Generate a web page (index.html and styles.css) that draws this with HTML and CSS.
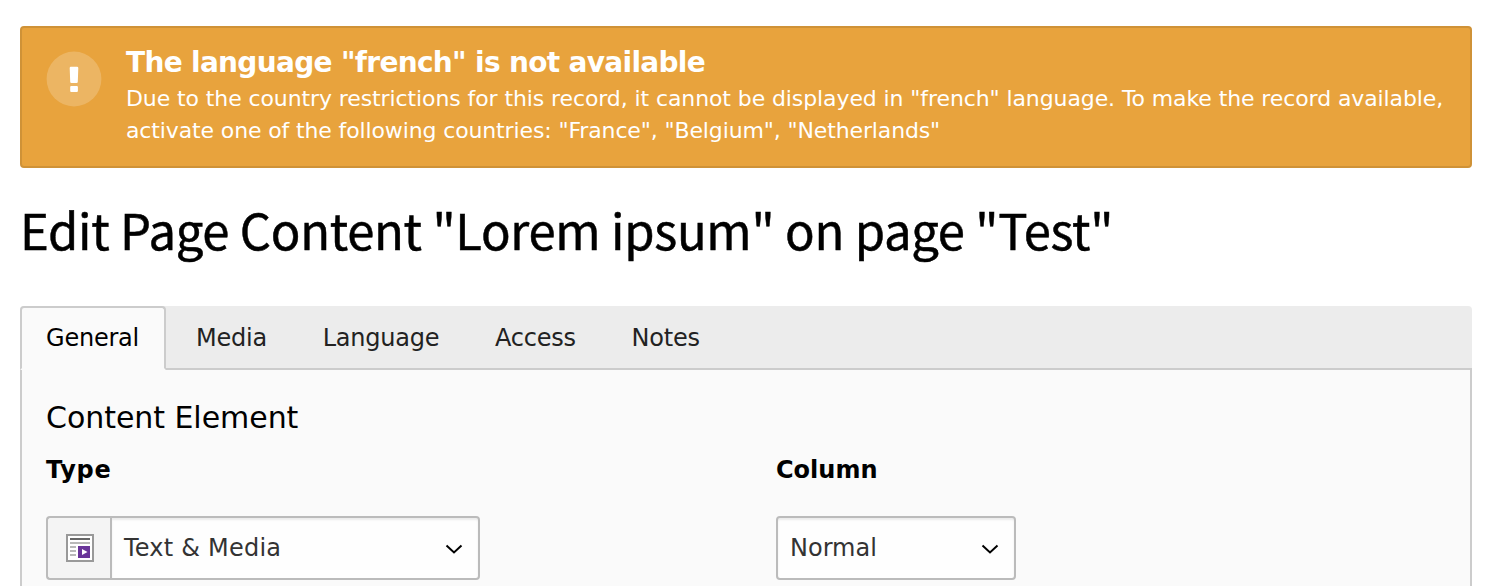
FILE: index.html
```html
<!DOCTYPE html>
<html lang="en">
<head>
<meta charset="utf-8">
<title>Edit Page Content</title>
<link rel="stylesheet" href="styles.css">
</head>
<body>
<main class="module">
  <section class="callout">
    <span class="callout-icon">
      <svg width="56" height="56" viewBox="0 0 56 56"><circle cx="28" cy="28" r="27.4" fill="#fff" fill-opacity=".2"/><path d="M23.700 17q0-1.200 1.200-1.200h6.200q1.200 0 1.200 1.200l-.5 13.800q0 1.200-1.200 1.200h-5.200q-1.200 0-1.200-1.200z" fill="#fff"/><rect x="24.200" y="35" width="7.700" height="6" rx="1" fill="#fff"/></svg>
    </span>
    <div class="callout-content">
      <div class="callout-title">The language "french" is not available</div>
      <div class="callout-body">Due to the country restrictions for this record, it cannot be displayed in "french" language. To make the record available,<br><span class="callout-countries">activate one of the following countries: "France", "Belgium", "Netherlands"</span></div>
    </div>
  </section>
  <h1 class="page-title">Edit Page Content "Lorem ipsum" on page "Test"</h1>
  <nav class="tabs">
    <a class="tab tab-active">General</a>
    <a class="tab">Media</a>
    <a class="tab">Language</a>
    <a class="tab">Access</a>
    <a class="tab">Notes</a>
  </nav>
  <section class="panel">
    <h2 class="panel-title">Content Element</h2>
    <div class="fields">
      <div class="field">
        <div class="field-label label-type">Type</div>
        <div class="select-group">
          <span class="select-addon">
            <svg width="28" height="28" viewBox="0 0 28 28"><rect x="1" y="1" width="26" height="26" fill="#fff" stroke="#999" stroke-width="2"/><path d="M4 4h20v2H4z" fill="#666"/><path d="M4 8h20v2H4zM4 12h6v2H4zM4 16h6v2H4zM4 20h6v2H4z" fill="#b9b9b9"/><path d="M12 12h12v12H12z" fill="#693599"/><path d="M16 15l5.500 3-5.500 3z" fill="#fff"/></svg>
          </span>
          <div class="select select-type">Text &amp; Media<svg class="chevron" width="18" height="12" viewBox="0 0 18 12"><path d="M1.500 2.500L9 9.500l7.500-7" fill="none" stroke="#000" stroke-width="2"/></svg></div>
        </div>
      </div>
      <div class="field">
        <div class="field-label">Column</div>
        <div class="select select-column">Normal<svg class="chevron" width="18" height="12" viewBox="0 0 18 12"><path d="M1.500 2.500L9 9.500l7.500-7" fill="none" stroke="#000" stroke-width="2"/></svg></div>
      </div>
    </div>
  </section>
</main>
</body>
</html>
```

FILE: styles.css
```css
* { box-sizing: border-box; }
body {
  margin: 0;
  background: #fff;
  color: #000;
  font-family: "DejaVu Sans", sans-serif;
  font-size: 24px;
}
.module { padding: 26px 24px 0 20px; }
.callout {
  display: flex;
  gap: 24px;
  height: 142px;
  padding: 18px 24px;
  border: 2px solid #cf9237;
  border-radius: 4px;
  background: #e8a33d;
  color: #fff;
}
.callout-icon { flex: none; width: 56px; height: 56px; margin-top: 5px; }
.callout-icon svg { display: block; }
.callout-content { white-space: nowrap; }
.callout-title {
  font-size: 28px;
  line-height: 34px;
  font-weight: 700;
  letter-spacing: -.69px;
}
.callout-body {
  margin-top: 3px;
  font-size: 22px;
  line-height: 32px;
  letter-spacing: -.1px;
}
.callout-countries { letter-spacing: -.13px; }
.page-title {
  height: 72px;
  margin: 25px 0 41px;
  font-family: "Noto Sans CJK JP", sans-serif;
  font-size: 49px;
  line-height: 72px;
  font-weight: 400;
  letter-spacing: -.31px;
  -webkit-text-stroke: .5px #000;
  white-space: nowrap;
}
.tabs {
  display: flex;
  height: 64px;
  border-radius: 4px 4px 0 0;
  background: #ececec;
  box-shadow: inset 0 -2px #ccc;
  line-height: 64px;
  letter-spacing: -.22px;
}
.tab { padding: 0 25.7px 0 30px; color: #222; }
.tab-active {
  width: 146px;
  padding: 0 0 0 24px;
  border: 2px solid #ccc;
  border-bottom-color: #fafafa;
  border-radius: 4px 4px 0 0;
  background: #fafafa;
  color: #000;
  line-height: 60px;
}
.panel {
  height: 216px;
  padding: 27px 24px 0;
  border: solid #ccc;
  border-width: 0 2px;
  background: #fafafa;
}
.panel-title { margin: 0; font-size: 30px; line-height: 42px; font-weight: 400; letter-spacing: -.05px; }
.fields { display: grid; grid-template-columns: 730px 1fr; }
.field-label { height: 77px; padding-top: 13px; line-height: 36px; font-weight: 700; }
.label-type { letter-spacing: .7px; }
.select-group { display: flex; }
.select-addon {
  display: flex;
  align-items: center;
  justify-content: center;
  width: 64px;
  height: 64px;
  padding-left: 2px;
  border: 2px solid #bbb;
  border-right: 0;
  border-radius: 4px 0 0 4px;
  background: #f4f4f4;
}
.select {
  display: flex;
  align-items: center;
  justify-content: space-between;
  height: 64px;
  padding: 0 15px 0 12px;
  border: 2px solid #bbb;
  border-radius: 4px;
  background: #fefefe;
  box-shadow: inset 0 2px 2px rgba(0, 0, 0, .075);
  color: #333;
}
.select-type { width: 370px; border-radius: 0 4px 4px 0; letter-spacing: .22px; }
.select-column { width: 240px; }
.chevron { margin-top: 2px; }
```
